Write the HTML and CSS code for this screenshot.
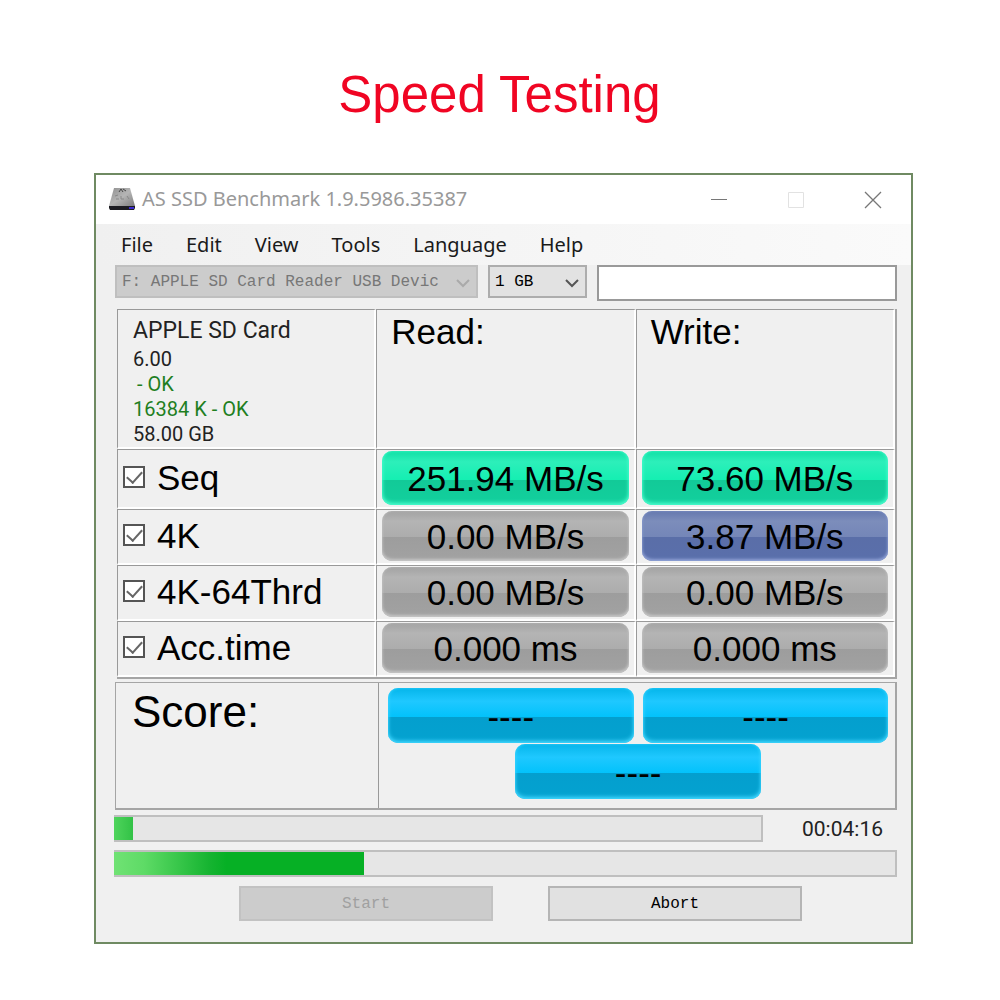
FILE: index.html
```
<!DOCTYPE html>
<html lang="en">

<head>
    <meta charset="UTF-8" />
    <meta name="viewport" content="width=device-width, initial-scale=1.0" />
    <title>Speed Testing</title>
    <link rel="stylesheet" href="styles.css">
</head>

<body>
    <h1>Speed Testing</h1>

    <main class="window">
        <header class="titlebar">
            <svg class="app-icon" width="26" height="24" viewBox="0 0 26 24">
                <defs>
                    <linearGradient id="metal" x1="0" y1="0" x2="1" y2="1">
                        <stop offset="0" stop-color="#8f8f8f" />
                        <stop offset="0.5" stop-color="#b5b5b5" />
                        <stop offset="1" stop-color="#7d7d7d" />
                    </linearGradient>
                </defs>
                <path d="M5 0h16l5 18H0z" fill="url(#metal)" />
                <path d="M0 18h26v2l-1 2H1l-1-2z" fill="#1c1c22" />
                <path d="M20 19h5v2h-5z" fill="#3b2bd0" />
                <path d="M10 4l2-3 2 3M14 1l3 2" fill="none" stroke="#444" />
                <path d="M6 8l3-1M7 11h3M12 8v3h3M18 8l2 3" fill="none" stroke="#888" />
            </svg>
            <span class="caption">AS SSD Benchmark 1.9.5986.35387</span>
            <div class="window-buttons">
                <button type="button" aria-label="Minimize">
                    <svg width="18" height="18" viewBox="0 0 18 18"><path d="M1 8.500h16" stroke="#777" /></svg>
                </button>
                <button type="button" aria-label="Maximize" disabled>
                    <svg width="18" height="18" viewBox="0 0 18 18"><path d="M1.500 1.500h15v15h-15z" fill="none" stroke="#e2e2e2" /></svg>
                </button>
                <button type="button" aria-label="Close">
                    <svg width="18" height="18" viewBox="0 0 18 18"><path d="M1 1l16 16M17 1L1 17" stroke="#777" stroke-width="1.300" /></svg>
                </button>
            </div>
        </header>

        <nav class="menu">
            <a href="#">File</a>
            <a href="#">Edit</a>
            <a href="#">View</a>
            <a href="#">Tools</a>
            <a href="#">Language</a>
            <a href="#">Help</a>
        </nav>

        <div class="content">
            <div class="toolbar">
                <div class="select drive">
                    <select aria-label="Drive" disabled>
                        <option>F: APPLE SD Card Reader USB Devic</option>
                    </select>
                    <svg width="14" height="9" viewBox="0 0 14 9"><path d="M1 1l6 6 6-6" /></svg>
                </div>
                <div class="select size">
                    <select aria-label="Test size">
                        <option>1 GB</option>
                    </select>
                    <svg width="14" height="9" viewBox="0 0 14 9"><path d="M1 1l6 6 6-6" /></svg>
                </div>
                <input type="text" class="note" aria-label="Note" />
            </div>

            <table class="results">
                <thead>
                    <tr>
                        <td class="info">
                            <div class="device">APPLE SD Card</div>
                            <div>6.00</div>
                            <div class="ok indent">- OK</div>
                            <div class="ok">16384 K - OK</div>
                            <div>58.00 GB</div>
                        </td>
                        <th>Read:</th>
                        <th>Write:</th>
                    </tr>
                </thead>
                <tbody>
                    <tr class="seq">
                        <td class="test"><label><input type="checkbox" checked /> Seq</label></td>
                        <td><div class="pill green">251.94 MB/s</div></td>
                        <td><div class="pill green">73.60 MB/s</div></td>
                    </tr>
                    <tr>
                        <td class="test"><label><input type="checkbox" checked /> 4K</label></td>
                        <td><div class="pill">0.00 MB/s</div></td>
                        <td><div class="pill blue">3.87 MB/s</div></td>
                    </tr>
                    <tr>
                        <td class="test"><label><input type="checkbox" checked /> 4K-64Thrd</label></td>
                        <td><div class="pill">0.00 MB/s</div></td>
                        <td><div class="pill">0.00 MB/s</div></td>
                    </tr>
                    <tr>
                        <td class="test"><label><input type="checkbox" checked /> Acc.time</label></td>
                        <td><div class="pill">0.000 ms</div></td>
                        <td><div class="pill">0.000 ms</div></td>
                    </tr>
                </tbody>
            </table>

            <section class="score">
                <h2>Score:</h2>
                <div class="score-values">
                    <div class="pill cyan">----</div>
                    <div class="pill cyan">----</div>
                    <div class="pill cyan">----</div>
                </div>
            </section>

            <div class="progress-row">
                <progress class="step" value="3" max="100" aria-label="Current test"></progress>
                <span class="time">00:04:16</span>
            </div>
            <progress class="total" value="32" max="100" aria-label="Total"></progress>

            <div class="actions">
                <button type="button" disabled>Start</button>
                <button type="button">Abort</button>
            </div>
        </div>
    </main>
</body>

</html>
```
FILE: styles.css
```
* {
    box-sizing: border-box;
}

body {
    margin: 0;
    padding: 63px 87px 56px 94px;
    background-color: #fff;
    color: #000;
    font-family: "Liberation Sans", Arial, sans-serif;
}

h1 {
    margin: 0 8px 46px 0;
    color: #f00523;
    font-size: 51px;
    font-weight: normal;
    line-height: 64px;
    text-align: center;
}

.window {
    border: 2px solid #6f8a62;
    background-color: #f0f0f0;
}

/* title bar */
.titlebar {
    display: flex;
    align-items: center;
    height: 49px;
    padding-left: 13px;
    background-color: #fff;
}

.caption {
    flex: 1;
    margin-left: 7px;
    color: #999;
    font-family: "Noto Sans", sans-serif;
    font-size: 20px;
    line-height: 28px;
    padding-bottom: 2px;
}

.window-buttons {
    display: flex;
}

.window-buttons button {
    display: flex;
    align-items: center;
    justify-content: center;
    width: 77px;
    height: 49px;
    padding: 0;
    border: none;
    background: none;
}

/* menu */
.menu {
    display: flex;
    gap: 33px;
    height: 41px;
    padding-left: 25px;
    background: linear-gradient(to right, #f0f0f0, #fafafa);
    line-height: 41px;
}

.menu a {
    color: #1a1a1a;
    font-family: "Noto Sans", sans-serif;
    font-size: 20px;
    text-decoration: none;
}

.content {
    padding: 0 14px 21px 18px;
}

/* toolbar */
.toolbar {
    display: grid;
    grid-template-columns: 363fr 99fr 300fr;
    align-items: start;
    gap: 10px;
    margin-bottom: 8px;
    padding-left: 1px;
}

.select {
    position: relative;
}

.select select {
    appearance: none;
    display: block;
    width: 100%;
    height: 33px;
    padding: 0 5px;
    border: 2px solid #adadad;
    border-radius: 0;
    background-color: #e2e2e2;
    color: #000;
    font-family: "Liberation Mono", monospace;
    font-size: 16px;
}

.select select:disabled {
    border-color: #bfbfbf;
    background-color: #ccc;
    color: #777;
    opacity: 1;
}

.select svg {
    position: absolute;
    top: 14px;
    right: 8px;
    fill: none;
    stroke: #555;
    stroke-width: 2;
    pointer-events: none;
}

.drive svg {
    stroke: #aaa;
}

.note {
    width: 100%;
    height: 36px;
    border: 2px solid #999;
    background-color: #fff;
}

/* results */
.results {
    width: calc(100% - 3px);
    margin-left: 3px;
    border: solid #a5a5a5;
    border-width: 0 2px 2px 0;
    border-spacing: 0;
    table-layout: fixed;
}

.results th,
.results td {
    height: 56px;
    padding: 0 5px 2px;
    border: solid #fff;
    border-width: 1px 2px 2px 1px;
    border-top-color: #999;
    border-left-color: #999;
}

.results .seq td {
    height: 60px;
}

.results th {
    padding: 2px 14px;
    font-size: 35px;
    font-weight: normal;
    line-height: 40px;
    text-align: left;
    vertical-align: top;
}

.results .info {
    height: 139px;
    padding: 4px 15px 0;
    color: #222;
    font-family: Roboto, sans-serif;
    font-size: 20px;
    line-height: 25px;
    vertical-align: top;
}

.info .device {
    font-size: 23px;
    line-height: 33px;
}

.info .ok {
    color: #1f7f1f;
}

.info .indent {
    padding-left: 4px;
}

.test label {
    display: flex;
    align-items: center;
    gap: 12px;
    font-size: 35px;
    line-height: 40px;
}

.test input {
    appearance: none;
    display: flex;
    justify-content: center;
    width: 22px;
    height: 22px;
    margin: 0 0 2px;
    border: 2px solid #555;
    background-color: #fff;
}

.test input:checked::after {
    content: "";
    width: 7px;
    height: 13px;
    border: solid #666;
    border-width: 0 2px 2px 0;
    transform: rotate(42deg);
}

.pill {
    height: 50px;
    border-radius: 10px;
    background: linear-gradient(#a2a2a2, #b4b4b4 20%, #acacac 52%, #9d9d9d 52%, #a2a2a2);
    box-shadow: inset 0 -2px 3px #c4c4c4, inset 0 0 3px #bbb;
    font-size: 35px;
    line-height: 52px;
    text-align: center;
}

.pill.green {
    height: 54px;
    background: linear-gradient(#10e0a5, #2defba 20%, #14efb2 54%, #12ca98 54%, #12d09d);
    box-shadow: inset 0 -2px 4px #4dffd0, inset 0 0 3px #35f5c0;
    line-height: 56px;
}

.pill.blue {
    background: linear-gradient(#6578ae, #7c8dbb 20%, #7486b8 52%, #5a6ea8 52%, #5a6fab);
    box-shadow: inset 0 -2px 3px #8ea0d4, inset 0 0 3px #7d90c5;
}

.pill.cyan {
    height: 55px;
    background: linear-gradient(#05b5ea, #1fc8ff 24%, #02c2fb 53%, #049fce 53%, #04a2d0);
    box-shadow: inset 0 -2px 4px #45d8ff, inset 0 0 3px #25ccff;
    line-height: 58px;
}

/* score */
.score {
    display: grid;
    grid-template-columns: 262fr 516fr;
    margin: 3px 0 5px 1px;
    border: solid #a5a5a5;
    border-width: 1px 2px 2px 1px;
}

.score h2 {
    margin: 0;
    padding: 4px 16px;
    font-size: 44px;
    font-weight: normal;
    line-height: 50px;
}

.score-values {
    display: flex;
    flex-wrap: wrap;
    justify-content: center;
    gap: 1px 9px;
    padding: 5px 6px 9px 8px;
    border-left: 1px solid #999;
}

.score-values .pill {
    width: calc(50% - 5px);
}

/* progress */
.progress-row {
    display: grid;
    grid-template-columns: 649fr 134fr;
    align-items: center;
    margin-bottom: 8px;
}

progress {
    appearance: none;
    display: block;
    width: 100%;
    height: 27px;
    border: 2px solid #bfbfbf;
    border-left: none;
}

progress::-webkit-progress-bar {
    background-color: #e6e6e6;
}

progress::-webkit-progress-value {
    background: linear-gradient(to right, #70e274, #5edb66 12%, #16b431 38%, #06b025 45%);
}

.step::-webkit-progress-value {
    background: linear-gradient(to right, #4fd45c, #32c246);
}

.time {
    padding-right: 14px;
    color: #222;
    font-family: Roboto, sans-serif;
    font-size: 21px;
    text-align: right;
}

/* actions */
.actions {
    display: flex;
    justify-content: center;
    gap: 55px;
    margin-top: 9px;
    padding: 0 33px 0 63px;
}

.actions button {
    flex: 0 1 254px;
    height: 35px;
    border: 2px solid #b5b5b5;
    background-color: #e1e1e1;
    color: #000;
    font-family: "Liberation Mono", monospace;
    font-size: 16px;
}

.actions button:disabled {
    border-color: #c2c2c2;
    background-color: #ccc;
    color: #a0a0a0;
}
```
